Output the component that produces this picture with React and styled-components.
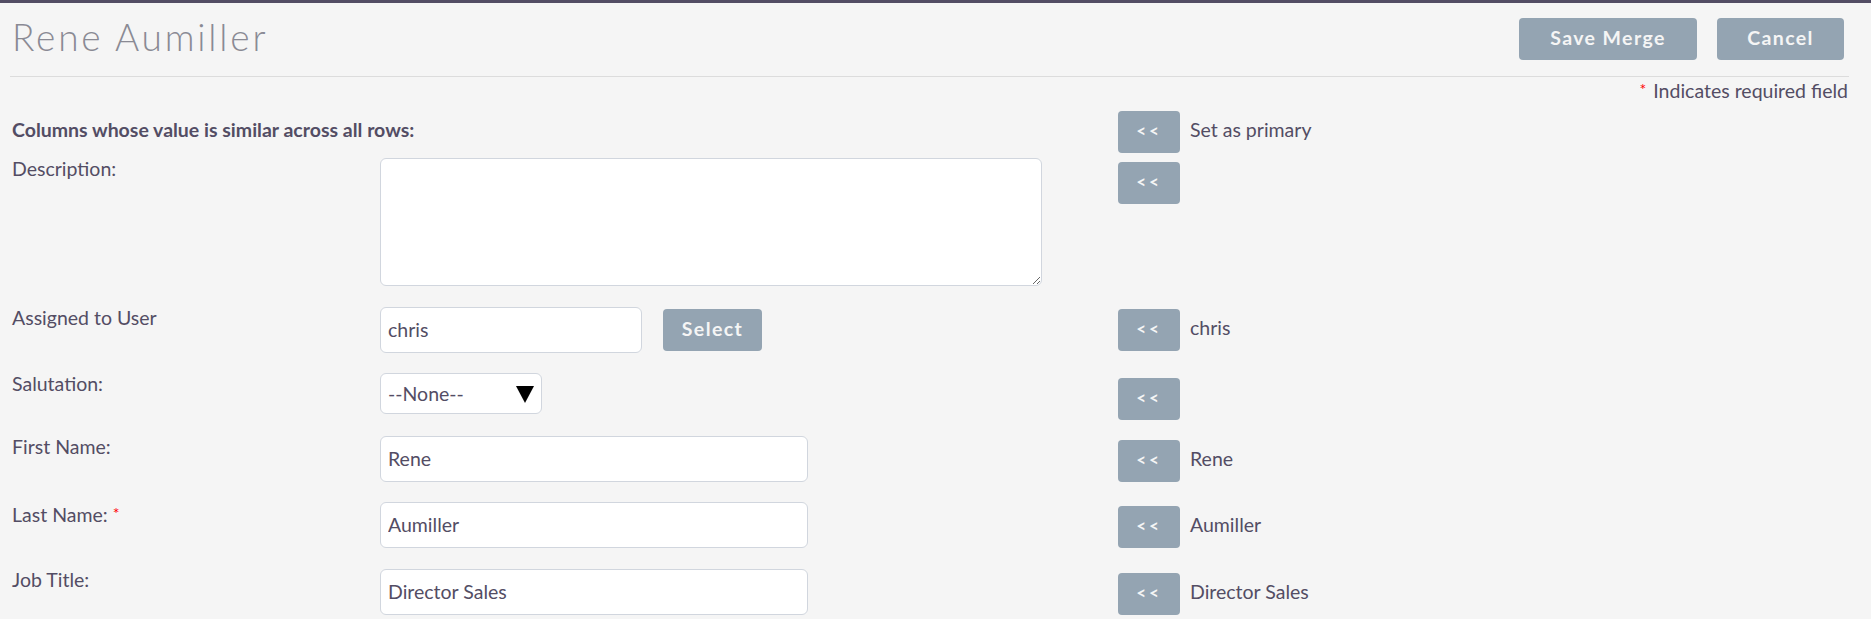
import React from 'react';
import styled, { createGlobalStyle } from 'styled-components';

const GlobalStyle = createGlobalStyle`
  html, body {
    margin: 0;
    padding: 0;
    background: #f5f5f5;
  }
  body {
    font-family: Lato, "Open Sans", sans-serif;
    color: #534d64;
  }
`;

const Page = styled.div`
  border-top: 3px solid #534d64;
  padding: 0 22px 0 10px;
  box-sizing: border-box;
  min-height: 616px;
`;

const Header = styled.div`
  display: flex;
  justify-content: space-between;
  align-items: flex-start;
  padding: 15px 5px 16px 2px;
  border-bottom: 1px solid #dcdcdc;
`;

const Title = styled.h2`
  margin: 0;
  font-size: 37px;
  line-height: 38px;
  font-weight: 300;
  letter-spacing: 2.8px;
  color: #8a8a94;
`;

const Actions = styled.div`
  display: flex;
  gap: 20px;
`;

const Button = styled.button`
  height: 42px;
  width: ${p => p.$w}px;
  padding: 0 0 3px;
  border: none;
  border-radius: 4px;
  background: #94a4b2;
  color: #f5f5f5;
  font-family: Lato, sans-serif;
  font-weight: 700;
  font-size: ${p => p.$size || 19.5}px;
  letter-spacing: ${p => p.$ls || 1.4}px;
  cursor: pointer;
  flex-shrink: 0;
`;

const RequiredNote = styled.div`
  text-align: right;
  font-size: 19.5px;
  line-height: 24px;
  padding: 0 1px 2px 0;
`;

const Star = styled.span`
  color: #ff0000;
  font-size: 16px;
  vertical-align: 3px;
  margin-right: ${p => p.$mr || 0}px;
`;

const Rows = styled.div`
  margin-top: 6px;
`;

const Row = styled.div`
  display: grid;
  grid-template-columns: 370px 738px 1fr;
  align-items: ${p => (p.$center ? 'center' : 'start')};
  padding-bottom: ${p => p.$space}px;
`;

const Label = styled.div`
  font-size: 19.5px;
  line-height: 22px;
  padding: ${p => (p.$center ? '0 0 4px 2px' : '0 0 0 2px')};
  font-weight: ${p => (p.$bold ? 700 : 400)};
  white-space: nowrap;
`;

const Field = styled.div`
  display: flex;
  align-items: flex-start;
  gap: 21px;
`;

const TextInput = styled.input`
  box-sizing: border-box;
  width: ${p => p.$w}px;
  height: 46px;
  padding: 0 7px 2px;
  border: 1px solid #d1d6de;
  border-radius: 6px;
  background: #fff;
  font-family: Lato, sans-serif;
  font-size: 19.5px;
  color: #534d64;
  outline: none;
`;

const TextArea = styled.textarea`
  box-sizing: border-box;
  width: 662px;
  height: 128px;
  border: 1px solid #d1d6de;
  border-radius: 6px;
  background: #fff;
  font-family: Lato, sans-serif;
  font-size: 19.5px;
  color: #534d64;
  outline: none;
`;

const SelectWrap = styled.div`
  position: relative;
  width: 162px;
  height: 41px;

  &::after {
    content: '';
    position: absolute;
    right: 8px;
    top: 13px;
    border-left: 9.5px solid transparent;
    border-right: 9.5px solid transparent;
    border-top: 17px solid #000;
    pointer-events: none;
  }
`;

const Select = styled.select`
  appearance: none;
  box-sizing: border-box;
  width: 100%;
  height: 100%;
  padding: 0 7px;
  border: 1px solid #d1d6de;
  border-radius: 6px;
  background: #fff;
  font-family: Lato, sans-serif;
  font-size: 19.5px;
  color: #534d64;
  outline: none;
`;

const SideCell = styled.div`
  display: flex;
  align-items: center;
  gap: 10px;
  margin-top: ${p => p.$top || 0}px;
`;

const Value = styled.span`
  font-size: 19.5px;
  padding-bottom: 5px;
`;

const Arrow = () => (
  <Button type="button" $w={62} $size={17} $ls={3}>
    {'<<'}
  </Button>
);

export default function App() {
  return (
    <Page>
      <GlobalStyle />
      <Header>
        <Title>Rene Aumiller</Title>
        <Actions>
          <Button type="button" $w={178}>Save Merge</Button>
          <Button type="button" $w={127}>Cancel</Button>
        </Actions>
      </Header>
      <RequiredNote>
        <Star $mr={7}>*</Star>Indicates required field
      </RequiredNote>

      <Rows>
        <Row $center $space={5}>
          <Label $bold $center>Columns whose value is similar across all rows:</Label>
          <div />
          <SideCell>
            <Arrow />
            <Value>Set as primary</Value>
          </SideCell>
        </Row>

        <Row $space={21}>
          <Label>Description:</Label>
          <Field>
            <TextArea />
          </Field>
          <SideCell $top={4}>
            <Arrow />
          </SideCell>
        </Row>

        <Row $space={20}>
          <Label>Assigned to User</Label>
          <Field>
            <TextInput $w={262} defaultValue="chris" />
            <Button type="button" $w={99} style={{ marginTop: 2 }}>Select</Button>
          </Field>
          <SideCell $top={2}>
            <Arrow />
            <Value>chris</Value>
          </SideCell>
        </Row>

        <Row $space={16}>
          <Label>Salutation:</Label>
          <Field>
            <SelectWrap>
              <Select defaultValue="">
                <option value="">--None--</option>
              </Select>
            </SelectWrap>
          </Field>
          <SideCell $top={5}>
            <Arrow />
          </SideCell>
        </Row>

        <Row $space={20}>
          <Label>First Name:</Label>
          <Field>
            <TextInput $w={428} defaultValue="Rene" />
          </Field>
          <SideCell $top={4}>
            <Arrow />
            <Value>Rene</Value>
          </SideCell>
        </Row>

        <Row $space={21}>
          <Label>
            Last Name: <Star>*</Star>
          </Label>
          <Field>
            <TextInput $w={428} defaultValue="Aumiller" />
          </Field>
          <SideCell $top={4}>
            <Arrow />
            <Value>Aumiller</Value>
          </SideCell>
        </Row>

        <Row $space={0}>
          <Label>Job Title:</Label>
          <Field>
            <TextInput $w={428} defaultValue="Director Sales" />
          </Field>
          <SideCell $top={4}>
            <Arrow />
            <Value>Director Sales</Value>
          </SideCell>
        </Row>
      </Rows>
    </Page>
  );
}
